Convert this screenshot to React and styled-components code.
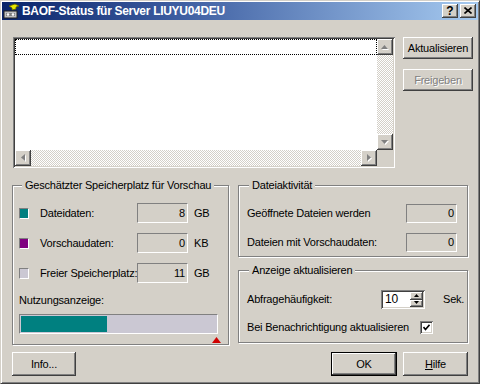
import React from 'react';
import styled, { createGlobalStyle, css } from 'styled-components';

const Global = createGlobalStyle`
  html, body { margin: 0; padding: 0; background: #d4d0c8; }
  body {
    font-family: "Liberation Sans", Arial, sans-serif;
    font-size: 11px;
    line-height: 13px;
    letter-spacing: -0.2px;
    color: #000;
  }
  * { box-sizing: border-box; }
`;

const raised = css`
  box-shadow: inset -1px -1px #404040, inset 1px 1px #fff, inset -2px -2px #808080, inset 2px 2px #d4d0c8;
`;
const sunken = css`
  box-shadow: inset 1px 1px #808080, inset -1px -1px #fff, inset 2px 2px #404040, inset -2px -2px #d4d0c8;
`;
const dither = css`
  background: repeating-conic-gradient(#d4d0c8 0 25%, #fff 0 50%) 0 0 / 2px 2px;
`;

const Window = styled.div`
  width: 480px;
  height: 384px;
  background: #d4d0c8;
  border: 1px solid;
  border-color: #d4d0c8 #404040 #404040 #d4d0c8;
  box-shadow: inset 1px 1px #fff, inset -1px -1px #808080;
  padding: 1px;
  display: flex;
  flex-direction: column;
`;

const TitleBar = styled.div`
  height: 18px;
  flex: none;
  display: flex;
  align-items: center;
  padding: 0 2px 0 1px;
  background: linear-gradient(90deg, #0a246a 0%, #3a5a9e 35%, #a6caf0 100%);
`;

const TitleText = styled.div`
  flex: 1;
  margin-left: 3px;
  color: #fff;
  font-weight: bold;
  font-size: 12px;
  letter-spacing: -0.3px;
  white-space: nowrap;
`;

const CaptionButton = styled.div`
  width: 16px;
  height: 14px;
  margin-left: ${p => p.$gap || 0}px;
  background: #d4d0c8;
  ${raised};
  display: flex;
  align-items: center;
  justify-content: center;
  font-weight: bold;
  font-size: 12px;
  letter-spacing: 0;
  line-height: 14px;
  padding-bottom: 1px;
`;

const Body = styled.div`
  flex: 1;
  display: flex;
  flex-direction: column;
  padding: 17px 5px 0 11px;
`;

const TopRow = styled.div`
  display: flex;
  gap: 8px;
`;

const ListBox = styled.div`
  width: 382px;
  height: 131px;
  padding: 2px;
  background: #fff;
  ${sunken};
  display: grid;
  grid-template-columns: 1fr 16px;
  grid-template-rows: 1fr 16px;
`;

const ListItems = styled.div`
  background: #fff;
`;

const FocusItem = styled.div`
  height: 16px;
  border: 1px dotted #000;
`;

const VScroll = styled.div`
  display: flex;
  flex-direction: column;
  ${dither};
`;

const HScroll = styled.div`
  display: flex;
  ${dither};
`;

const Track = styled.div`
  flex: 1;
`;

const Corner = styled.div`
  background: #d4d0c8;
`;

const ScrollBtn = styled.div`
  width: 16px;
  height: 16px;
  flex: none;
  background: #d4d0c8;
  ${raised};
  display: flex;
  align-items: center;
  justify-content: center;
`;

const ButtonCol = styled.div`
  display: flex;
  flex-direction: column;
  gap: 10px;
`;

const PushButton = styled.div`
  width: ${p => p.$w}px;
  height: ${p => p.$h}px;
  background: #d4d0c8;
  display: flex;
  align-items: center;
  justify-content: center;
  white-space: nowrap;
  ${p => p.$default
    ? css`box-shadow: inset 0 0 0 1px #000, inset -2px -2px #404040, inset 2px 2px #fff, inset -3px -3px #808080;`
    : raised};
  color: ${p => (p.$disabled ? '#808080' : '#000')};
  text-shadow: ${p => (p.$disabled ? '1px 1px 0 #fff' : 'none')};
`;

const Mnemonic = styled.span`
  text-decoration: underline;
`;

const MiddleRow = styled.div`
  display: flex;
  gap: 9px;
  margin-top: 17px;
  margin-left: -1px;
`;

const RightCol = styled.div`
  display: flex;
  flex-direction: column;
  gap: 13px;
  width: 230px;
`;

const Group = styled.div`
  position: relative;
  width: ${p => p.$w}px;
  height: ${p => p.$h}px;
  border: 1px solid #808080;
  box-shadow: inset 1px 1px #fff, 1px 1px #fff;
  padding: ${p => p.$pad};
  display: flex;
  flex-direction: column;
`;

const Legend = styled.span`
  position: absolute;
  top: -7px;
  left: ${p => p.$left || 9}px;
  padding: 0 3px;
  background: #d4d0c8;
  line-height: 13px;
  white-space: nowrap;
`;

const Row = styled.div`
  display: flex;
  align-items: center;
  height: ${p => p.$h || 20}px;
  margin-top: ${p => p.$mt || 0}px;
`;

const Swatch = styled.div`
  width: 10px;
  height: 11px;
  margin-right: 11px;
  border: 1px solid;
  border-color: #808080 #fff #fff #808080;
  background: ${p => p.$color};
`;

const Label = styled.div`
  width: ${p => p.$w}px;
  white-space: nowrap;
  flex: none;
`;

const FlexLabel = styled.div`
  flex: 1;
  white-space: nowrap;
`;

const ValueBox = styled.div`
  width: 51px;
  height: ${p => p.$h || 20}px;
  border: 1px solid;
  border-color: #808080 #fff #fff #808080;
  display: flex;
  align-items: center;
  justify-content: flex-end;
  padding-right: 2px;
  flex: none;
`;

const Unit = styled.div`
  margin-left: 6px;
`;

const UsageLabel = styled.div`
  margin-top: 11px;
`;

const ProgressBar = styled.div`
  width: 199px;
  height: 20px;
  margin-top: 7px;
  border: 1px solid;
  border-color: #808080 #fff #fff #808080;
  padding: 1px;
  background: #cbc8d3;
  display: flex;
`;

const ProgressFill = styled.div`
  height: 100%;
  background: #008080;
`;

const Marker = styled.div`
  margin-top: 3px;
  margin-left: 193px;
  width: 9px;
  height: 6px;
  display: flex;
`;

const SpinBox = styled.div`
  width: 44px;
  height: 19px;
  padding: 2px;
  background: #fff;
  ${sunken};
  display: flex;
  flex: none;
`;

const SpinEdit = styled.div`
  flex: 1;
  padding-left: 2px;
  display: flex;
  align-items: center;
  font-size: 12px;
`;

const SpinButtons = styled.div`
  width: 13px;
  display: flex;
  flex-direction: column;
`;

const SpinBtn = styled.div`
  flex: 1;
  background: #d4d0c8;
  ${raised};
  display: flex;
  align-items: center;
  justify-content: center;
`;

const SekLabel = styled.div`
  margin-left: 18px;
`;

const CheckBox = styled.div`
  width: 13px;
  height: 13px;
  background: #fff;
  ${sunken};
  display: flex;
  align-items: center;
  justify-content: center;
  flex: none;
`;

const BottomRow = styled.div`
  display: flex;
  justify-content: space-between;
  width: 456px;
  margin-top: 7px;
  margin-left: -1px;
`;

const ButtonPair = styled.div`
  display: flex;
  gap: 6px;
`;

const Arrow = ({ dir, color = '#808080', shadow = true, size = 7 }) => {
  const h = Math.ceil(size / 2) + 0;
  const pts = {
    up: `0,${h} ${size},${h} ${size / 2},0`,
    down: `0,0 ${size},0 ${size / 2},${h}`,
    left: `${h},0 ${h},${size} 0,${size / 2}`,
    right: `0,0 0,${size} ${h},${size / 2}`,
  }[dir];
  const horiz = dir === 'left' || dir === 'right';
  const w = horiz ? h + 1 : size + 1;
  const hh = horiz ? size + 1 : h + 1;
  return (
    <svg width={w} height={hh} viewBox={`0 0 ${w} ${hh}`}>
      {shadow && <polygon points={pts} fill="#fff" transform="translate(1,1)" />}
      <polygon points={pts} fill={color} />
    </svg>
  );
};

const TitleIcon = () => (
  <svg width="16" height="16" viewBox="0 0 16 16">
    <polygon points="6,3 12,1 16,3 13,4 13,6 9,7 9,5" fill="#e8e800" stroke="#606000" strokeWidth="0.8" />
    <rect x="1" y="8" width="13" height="7" fill="#c0c0c0" stroke="#202020" strokeWidth="1" />
    <rect x="3" y="10" width="9" height="3" fill="#808080" />
    <circle cx="5" cy="11.5" r="1.3" fill="#fff" />
    <circle cx="10" cy="11.5" r="1.3" fill="#fff" />
  </svg>
);

const CloseGlyph = () => (
  <svg width="8" height="7" viewBox="0 0 8 7">
    <path d="M0.5 0.5 L7.5 6.5 M7.5 0.5 L0.5 6.5" stroke="#000" strokeWidth="1.6" />
  </svg>
);

const CheckGlyph = () => (
  <svg width="7" height="7" viewBox="0 0 7 7">
    <path d="M0.5 3 L2.5 5.5 L6.5 0.8" stroke="#000" strokeWidth="1.6" fill="none" />
  </svg>
);

const storage = [
  { label: 'Dateidaten:', color: '#008080', value: '8', unit: 'GB' },
  { label: 'Vorschaudaten:', color: '#800080', value: '0', unit: 'KB' },
  { label: 'Freier Speicherplatz:', color: '#cbc8d3', value: '11', unit: 'GB' },
];

const usedPercent = 44;

export default function App() {
  return (
    <>
      <Global />
      <Window>
        <TitleBar>
          <TitleIcon />
          <TitleText>BAOF-Status für Server LIUYU04DEU</TitleText>
          <CaptionButton>?</CaptionButton>
          <CaptionButton $gap={2}><CloseGlyph /></CaptionButton>
        </TitleBar>
        <Body>
          <TopRow>
            <ListBox>
              <ListItems>
                <FocusItem />
              </ListItems>
              <VScroll>
                <ScrollBtn><Arrow dir="up" /></ScrollBtn>
                <Track />
                <ScrollBtn><Arrow dir="down" /></ScrollBtn>
              </VScroll>
              <HScroll>
                <ScrollBtn><Arrow dir="left" /></ScrollBtn>
                <Track />
                <ScrollBtn><Arrow dir="right" /></ScrollBtn>
              </HScroll>
              <Corner />
            </ListBox>
            <ButtonCol>
              <PushButton $w={70} $h={22}>Aktualisieren</PushButton>
              <PushButton $w={70} $h={22} $disabled>Freigeben</PushButton>
            </ButtonCol>
          </TopRow>

          <MiddleRow>
            <Group $w={217} $h={160} $pad="17px 0 0 6px">
              <Legend>Geschätzter Speicherplatz für Vorschau</Legend>
              {storage.map((s, i) => (
                <Row key={s.label} $mt={i ? 10 : 0}>
                  <Swatch $color={s.color} />
                  <Label $w={97}>{s.label}</Label>
                  <ValueBox>{s.value}</ValueBox>
                  <Unit>{s.unit}</Unit>
                </Row>
              ))}
              <UsageLabel>Nutzungsanzeige:</UsageLabel>
              <ProgressBar>
                <ProgressFill style={{ width: `${usedPercent}%` }} />
              </ProgressBar>
              <Marker>
                <svg width="9" height="6" viewBox="0 0 9 6">
                  <polygon points="0,6 9,6 4.5,0" fill="#d00000" />
                </svg>
              </Marker>
            </Group>

            <RightCol>
              <Group $w={230} $h={72} $pad="18px 10px 0 8px">
                <Legend $left={10}>Dateiaktivität</Legend>
                <Row $h={19}>
                  <FlexLabel>Geöffnete Dateien werden</FlexLabel>
                  <ValueBox $h={19}>0</ValueBox>
                </Row>
                <Row $h={19} $mt={10}>
                  <FlexLabel>Dateien mit Vorschaudaten:</FlexLabel>
                  <ValueBox $h={19}>0</ValueBox>
                </Row>
              </Group>
              <Group $w={230} $h={73} $pad="19px 0 0 8px">
                <Legend $left={10}>Anzeige aktualisieren</Legend>
                <Row $h={19}>
                  <Label $w={134}>Abfragehäufigkeit:</Label>
                  <SpinBox>
                    <SpinEdit>10</SpinEdit>
                    <SpinButtons>
                      <SpinBtn><Arrow dir="up" color="#000" shadow={false} size={5} /></SpinBtn>
                      <SpinBtn><Arrow dir="down" color="#000" shadow={false} size={5} /></SpinBtn>
                    </SpinButtons>
                  </SpinBox>
                  <SekLabel>Sek.</SekLabel>
                </Row>
                <Row $h={16} $mt={10}>
                  <Label $w={173}>Bei Benachrichtigung aktualisieren</Label>
                  <CheckBox><CheckGlyph /></CheckBox>
                </Row>
              </Group>
            </RightCol>
          </MiddleRow>

          <BottomRow>
            <PushButton $w={64} $h={24}>Info...</PushButton>
            <ButtonPair>
              <PushButton $w={66} $h={24} $default>OK</PushButton>
              <PushButton $w={65} $h={24}><Mnemonic>H</Mnemonic>ilfe</PushButton>
            </ButtonPair>
          </BottomRow>
        </Body>
      </Window>
    </>
  );
}
